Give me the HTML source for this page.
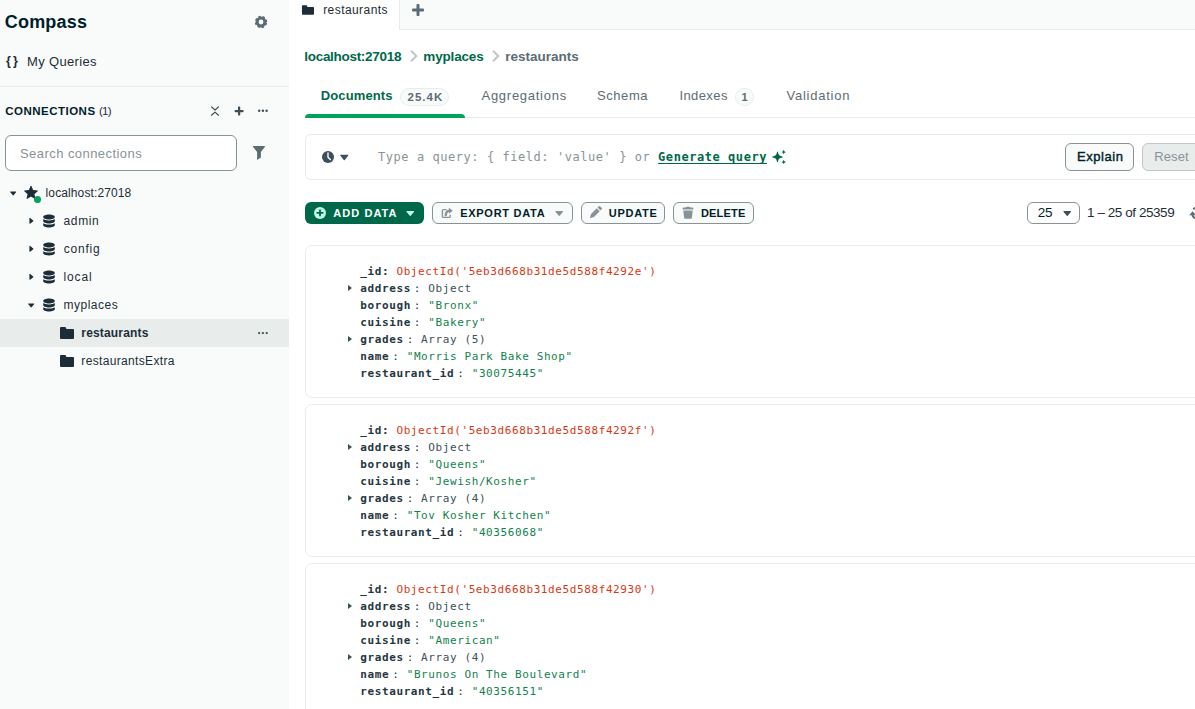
<!DOCTYPE html>
<html><head><meta charset="utf-8"><title>Compass</title>
<style>
*{box-sizing:border-box;margin:0;padding:0}
html,body{width:1195px;height:709px;overflow:hidden;background:#fff}
body{font-family:"Liberation Sans",sans-serif;color:#001e2b;font-size:13px;position:relative}
.abs{position:absolute;white-space:nowrap}
svg{position:absolute;overflow:visible}
.mono{font-family:"DejaVu Sans Mono","Liberation Mono",monospace}
.t12{font-size:12px;line-height:16px;color:#1c2d38}
.btn{position:absolute;top:202px;height:22px;border:1px solid #889397;border-radius:6px;background:#f9fbfa}
.btxt{position:absolute;top:205px;font-size:11px;line-height:16px;font-weight:700;color:#001e2b;white-space:nowrap}
.card{position:absolute;left:305px;width:920px;height:153px;border:1px solid #e8edeb;border-radius:7px;background:#fff}
.doc{position:absolute;left:54.3px;top:17px;font-size:11px;letter-spacing:0.6px;line-height:17px;white-space:pre;color:#3d4f58}
.doc b{color:#26363f}
.doc .c{margin-left:3px;color:#26363f}
.doc .oid{color:#d83713}
.doc .s{color:#12824d}
.doc .t{color:#3d4f58}
.car{position:absolute;left:-12px;width:0;height:0;border-left:4px solid #3d4f58;border-top:3px solid transparent;border-bottom:3px solid transparent}
</style></head><body>
<!-- ================= SIDEBAR ================= -->
<div class="abs" style="left:0;top:0;width:289px;height:709px;background:#f9fbfa"></div>
<div id="t_compass" class="abs" style="left:4.8px;top:10.7px;font-size:18px;font-weight:700;line-height:22px;color:#001e2b;letter-spacing:0.18px">Compass</div>
<svg id="i_gear" style="left:253px;top:14px" width="16" height="16" viewBox="0 0 16 16"><circle cx="8" cy="8" r="3.9" fill="none" stroke="#5c6c75" stroke-width="3"/><circle cx="8" cy="8" r="5.5" fill="none" stroke="#5c6c75" stroke-width="1.4" stroke-dasharray="2.5 1.82" stroke-dashoffset="3.41"/></svg>
<div id="t_braces" class="abs" style="left:6px;top:52px;font-size:12.5px;font-weight:700;line-height:18px;color:#1c2d38;letter-spacing:2.2px">{}</div>
<div id="t_myq" class="abs" style="left:27px;top:53.2px;font-size:13px;line-height:18px;color:#1c2d38;letter-spacing:0.35px">My Queries</div>
<div class="abs" style="left:0;top:86px;width:289px;height:1px;background:#e8edeb"></div>
<div id="t_conn" class="abs" style="left:5.3px;top:102px;font-size:11.5px;font-weight:700;line-height:18px;color:#001e2b;letter-spacing:0.48px">CONNECTIONS</div>
<div id="t_conn1" class="abs" style="left:99px;top:102px;font-size:11.5px;line-height:18px;color:#1c2d38;letter-spacing:-0.8px">(1)</div>
<svg id="i_collapse" style="left:207px;top:103px" width="16" height="16" viewBox="0 0 16 16" fill="none" stroke="#3d4f58" stroke-width="1.25" stroke-linecap="round" stroke-linejoin="round"><path d="M4.5 3.9 8 7l3.500-3.100M4.500 12.200 8 9.100l3.500 3.100"/></svg>
<svg id="i_plus_s" style="left:231px;top:103px" width="16" height="16" viewBox="0 0 16 16"><path fill="#3d4f58" d="M7.5 2a1 1 0 0 0-1 1v3.5H3a1 1 0 0 0-1 1v1a1 1 0 0 0 1 1h3.5V13a1 1 0 0 0 1 1h1a1 1 0 0 0 1-1V9.5H13a1 1 0 0 0 1-1v-1a1 1 0 0 0-1-1H9.5V3a1 1 0 0 0-1-1h-1Z" transform="translate(8.1 8.1) scale(0.75) translate(-8 -8)"/></svg>
<svg id="i_dots_s" style="left:255px;top:103px" width="16" height="16" viewBox="0 0 16 16" fill="#3d4f58"><circle cx="4.200" cy="7.700" r="1.200"/><circle cx="7.900" cy="7.700" r="1.200"/><circle cx="11.600" cy="7.700" r="1.200"/></svg>
<div class="abs" style="left:5px;top:135px;width:232px;height:36px;border:1px solid #889397;border-radius:6px;background:#fff"></div>
<div id="t_search" class="abs" style="left:20px;top:144.5px;font-size:13px;line-height:18px;color:#889397;letter-spacing:0.44px">Search connections</div>
<svg id="i_filter" style="left:251px;top:145px" width="16" height="16" viewBox="0 0 16 16"><path fill="#5c6c75" d="M2.300 0.900h11.400c.4 0 .6.500.3.800L9.900 7.100v5.500L6.100 14.900V7.100L2 1.700c-.3-.3-.1-.8.3-.8z"/></svg>

<!-- tree -->
<div class="abs" style="left:0;top:319px;width:289px;height:28px;background:#e8edeb"></div>
<svg style="left:5px;top:185px" width="16" height="16" viewBox="0 0 16 16"><path fill="#1c2d38" d="M8.679 10.796a.554.554 0 0 1-.858 0L4.64 6.976C4.32 6.594 4.582 6 5.069 6h6.362c.487 0 .748.594.43.976l-3.182 3.82Z" transform="translate(8 8) scale(0.8) translate(-8 -8)"/></svg>
<svg id="i_star" style="left:23px;top:184.5px" width="16" height="16" viewBox="0 0 16 16"><path fill="#1c2d38" d="M7.538 1.11a.5.5 0 0 1 .924 0l1.537 3.696a.5.5 0 0 0 .421.306l3.99.32a.5.5 0 0 1 .285.878l-3.04 2.604a.5.5 0 0 0-.16.496l.928 3.893a.5.5 0 0 1-.747.542L8.261 11.76a.5.5 0 0 0-.522 0l-3.415 2.086a.5.5 0 0 1-.747-.542l.928-3.893a.5.5 0 0 0-.16-.496L1.304 6.31a.5.5 0 0 1 .285-.878l3.99-.32a.5.5 0 0 0 .421-.306L7.538 1.11Z"/></svg>
<div class="abs" style="left:33.5px;top:195.5px;width:7px;height:7px;border-radius:50%;background:#00a35c"></div>
<div id="t_host" class="abs t12" style="left:45.6px;top:185px;letter-spacing:0.11px">localhost:27018</div>

<svg style="left:23px;top:213px" width="16" height="16" viewBox="0 0 16 16"><path fill="#1c2d38" d="M10.796 7.321a.554.554 0 0 1 0 .858l-3.82 3.181c-.382.319-.976.057-.976-.43V4.57c0-.487.594-.749.976-.43l3.82 3.182Z" transform="translate(8 8) scale(0.8) translate(-8 -8)"/></svg>
<svg style="left:23px;top:241px" width="16" height="16" viewBox="0 0 16 16"><path fill="#1c2d38" d="M10.796 7.321a.554.554 0 0 1 0 .858l-3.82 3.181c-.382.319-.976.057-.976-.43V4.57c0-.487.594-.749.976-.43l3.82 3.182Z" transform="translate(8 8) scale(0.8) translate(-8 -8)"/></svg>
<svg style="left:23px;top:269px" width="16" height="16" viewBox="0 0 16 16"><path fill="#1c2d38" d="M10.796 7.321a.554.554 0 0 1 0 .858l-3.82 3.181c-.382.319-.976.057-.976-.43V4.57c0-.487.594-.749.976-.43l3.82 3.182Z" transform="translate(8 8) scale(0.8) translate(-8 -8)"/></svg>
<svg style="left:23px;top:297px" width="16" height="16" viewBox="0 0 16 16"><path fill="#1c2d38" d="M8.679 10.796a.554.554 0 0 1-.858 0L4.64 6.976C4.32 6.594 4.582 6 5.069 6h6.362c.487 0 .748.594.43.976l-3.182 3.82Z" transform="translate(8 8) scale(0.8) translate(-8 -8)"/></svg>

<svg class="db" style="left:41px;top:213px" width="16" height="16" viewBox="0 0 16 16" fill="#1c2d38"><path d="M8 1.500c3.200 0 5.800 1.100 5.800 2.500S11.200 6.500 8 6.500 2.200 5.400 2.200 4 4.800 1.500 8 1.500zM2.200 6.100c1 .8 3.200 1.300 5.800 1.300s4.800-.5 5.800-1.300v2.200c0 1.200-2.600 2.200-5.800 2.200S2.200 9.500 2.200 8.300zM2.200 10.200c1 .8 3.200 1.300 5.800 1.300s4.800-.5 5.800-1.300v2c0 1.200-2.600 2.200-5.800 2.200S2.200 13.400 2.200 12.200z"/></svg>
<svg class="db" style="left:41px;top:241px" width="16" height="16" viewBox="0 0 16 16" fill="#1c2d38"><path d="M8 1.500c3.200 0 5.800 1.100 5.800 2.500S11.200 6.500 8 6.500 2.200 5.400 2.200 4 4.800 1.500 8 1.500zM2.200 6.100c1 .8 3.200 1.300 5.800 1.300s4.800-.5 5.800-1.300v2.200c0 1.200-2.600 2.200-5.800 2.200S2.200 9.500 2.200 8.300zM2.200 10.200c1 .8 3.200 1.300 5.800 1.300s4.800-.5 5.800-1.300v2c0 1.200-2.600 2.200-5.800 2.200S2.200 13.400 2.200 12.200z"/></svg>
<svg class="db" style="left:41px;top:269px" width="16" height="16" viewBox="0 0 16 16" fill="#1c2d38"><path d="M8 1.500c3.200 0 5.800 1.100 5.800 2.500S11.200 6.500 8 6.500 2.200 5.400 2.200 4 4.800 1.500 8 1.500zM2.200 6.100c1 .8 3.200 1.300 5.800 1.300s4.800-.5 5.800-1.300v2.200c0 1.200-2.600 2.200-5.800 2.200S2.200 9.500 2.200 8.300zM2.200 10.200c1 .8 3.200 1.300 5.800 1.300s4.800-.5 5.800-1.300v2c0 1.200-2.600 2.200-5.800 2.200S2.200 13.400 2.200 12.200z"/></svg>
<svg class="db" style="left:41px;top:297px" width="16" height="16" viewBox="0 0 16 16" fill="#1c2d38"><path d="M8 1.500c3.200 0 5.800 1.100 5.800 2.500S11.200 6.500 8 6.500 2.200 5.400 2.200 4 4.800 1.500 8 1.500zM2.200 6.100c1 .8 3.200 1.300 5.800 1.300s4.800-.5 5.800-1.300v2.200c0 1.200-2.600 2.200-5.800 2.200S2.200 9.500 2.200 8.300zM2.200 10.200c1 .8 3.200 1.300 5.800 1.300s4.800-.5 5.800-1.300v2c0 1.200-2.600 2.200-5.800 2.200S2.200 13.400 2.200 12.200z"/></svg>

<div id="t_admin" class="abs t12" style="left:63.5px;top:213px;font-size:12px;letter-spacing:0.65px">admin</div>
<div id="t_config" class="abs t12" style="left:63.7px;top:241px;font-size:12px;letter-spacing:0.78px">config</div>
<div id="t_local" class="abs t12" style="left:63.5px;top:269px;font-size:12px;letter-spacing:0.85px">local</div>
<div id="t_myplaces" class="abs t12" style="left:63.5px;top:297px;font-size:12px;letter-spacing:0.5px">myplaces</div>

<svg style="left:59px;top:325px" width="16" height="16" viewBox="0 0 16 16"><path fill="#1c2d38" d="M2 2a1 1 0 0 0-1 1v10a1 1 0 0 0 1 1h12a1 1 0 0 0 1-1V5a1 1 0 0 0-1-1H8a1 1 0 0 1-1-1 1 1 0 0 0-1-1H2Z"/></svg>
<svg style="left:59px;top:353px" width="16" height="16" viewBox="0 0 16 16"><path fill="#1c2d38" d="M2 2a1 1 0 0 0-1 1v10a1 1 0 0 0 1 1h12a1 1 0 0 0 1-1V5a1 1 0 0 0-1-1H8a1 1 0 0 1-1-1 1 1 0 0 0-1-1H2Z"/></svg>
<div id="t_rest_s" class="abs t12" style="left:81.3px;top:325px;font-weight:700;letter-spacing:0.17px">restaurants</div>
<div id="t_restx" class="abs t12" style="left:81.3px;top:353px;letter-spacing:0.34px">restaurantsExtra</div>
<svg style="left:255px;top:325px" width="16" height="16" viewBox="0 0 16 16" fill="#3d4f58"><circle cx="4.1" cy="8.1" r="1.15"/><circle cx="7.9" cy="8.1" r="1.15"/><circle cx="11.7" cy="8.1" r="1.15"/></svg>

<!-- ================= MAIN ================= -->
<div class="abs" style="left:289px;top:0;width:906px;height:30px;background:#f9fbfa;border-bottom:1px solid #e8edeb"></div>
<div class="abs" style="left:289px;top:0;width:111px;height:30px;background:#fff;border-right:1px solid #e8edeb"></div>
<svg style="left:300px;top:2px" width="16" height="16" viewBox="0 0 16 16"><path fill="#1c2d38" d="M2 2.500a1 1 0 0 0-1 1v9a1 1 0 0 0 1 1h12a1 1 0 0 0 1-1V5.500a1 1 0 0 0-1-1H8a1 1 0 0 1-1-1 1 1 0 0 0-1-1H2Z" transform="translate(1.100 1.100) scale(0.860)"/></svg>
<div id="t_tab" class="abs t12" style="left:323.2px;top:1.6px;letter-spacing:0.43px">restaurants</div>
<svg style="left:410px;top:2px" width="16" height="16" viewBox="0 0 16 16"><path fill="#5c6c75" d="M7.5 2a1 1 0 0 0-1 1v3.5H3a1 1 0 0 0-1 1v1a1 1 0 0 0 1 1h3.5V13a1 1 0 0 0 1 1h1a1 1 0 0 0 1-1V9.5H13a1 1 0 0 0 1-1v-1a1 1 0 0 0-1-1H9.5V3a1 1 0 0 0-1-1h-1Z"/></svg>

<div id="t_bc1" class="abs" style="left:304.3px;top:47.7px;font-size:13.500px;line-height:18px;font-weight:700;color:#00684a;letter-spacing:-0.3px">localhost:27018</div>
<svg style="left:405.500px;top:48px" width="16" height="16" viewBox="0 0 16 16" fill="none" stroke="#c1c7c6" stroke-width="2" ><path d="M5 2.700 10.300 8 5 13.300"/></svg>
<div id="t_bc2" class="abs" style="left:423.3px;top:47.7px;font-size:13.500px;line-height:18px;font-weight:700;color:#00684a;letter-spacing:-0.16px">myplaces</div>
<svg style="left:487.500px;top:48px" width="16" height="16" viewBox="0 0 16 16" fill="none" stroke="#c1c7c6" stroke-width="2" ><path d="M5 2.700 10.300 8 5 13.300"/></svg>
<div id="t_bc3" class="abs" style="left:505.3px;top:47.7px;font-size:13.500px;line-height:18px;font-weight:700;color:#5c6c75">restaurants</div>

<div id="t_docs" class="abs" style="left:320.8px;top:87.3px;font-size:13px;line-height:18px;font-weight:700;color:#00684a;letter-spacing:0.12px">Documents</div>
<div class="abs" style="left:400px;top:88px;width:49px;height:18px;border:1px solid #e8edeb;border-radius:9px;background:#f9fbfa"></div>
<div id="t_254" class="abs" style="left:407.5px;top:87.7px;font-size:11.5px;line-height:18px;font-weight:700;color:#5c6c75;letter-spacing:1.0px">25.4K</div>
<div id="t_aggr" class="abs" style="left:481.5px;top:87.3px;font-size:13px;line-height:18px;color:#5c6c75;letter-spacing:0.73px">Aggregations</div>
<div id="t_schema" class="abs" style="left:597.1px;top:87.3px;font-size:13px;line-height:18px;color:#5c6c75;letter-spacing:0.54px">Schema</div>
<div id="t_idx" class="abs" style="left:679.4px;top:87.3px;font-size:13px;line-height:18px;color:#5c6c75;letter-spacing:0.42px">Indexes</div>
<div class="abs" style="left:735px;top:88px;width:19px;height:18px;border:1px solid #e8edeb;border-radius:9px;background:#f9fbfa"></div>
<div id="t_one" class="abs" style="left:741.500px;top:87.7px;font-size:11px;line-height:18px;font-weight:700;color:#5c6c75">1</div>
<div id="t_valid" class="abs" style="left:786.5px;top:87.3px;font-size:13px;line-height:18px;color:#5c6c75;letter-spacing:0.76px">Validation</div>
<div class="abs" style="left:305px;top:117px;width:890px;height:1px;background:#e8edeb"></div>
<div class="abs" style="left:305px;top:114px;width:160px;height:4px;background:#00a35c;border-radius:4px 4px 0 0"></div>

<!-- query bar -->
<div class="abs" style="left:305px;top:134px;width:920px;height:46px;border:1px solid #e8edeb;border-radius:6px;background:#fff"></div>
<svg id="i_clock" style="left:320px;top:149px" width="16" height="16" viewBox="0 0 16 16"><circle cx="8" cy="8" r="6" fill="#3d4f58"/><path d="M8 4v4.300l2.300 2.300" fill="none" stroke="#fff" stroke-width="1.400" stroke-linecap="round"/></svg>
<svg style="left:336px;top:149px" width="16" height="16" viewBox="0 0 16 16"><path fill="#3d4f58" d="M8.679 10.796a.554.554 0 0 1-.858 0L4.640 6.976C4.320 6.594 4.582 6 5.069 6h6.362c.487 0 .748.594.430.976l-3.182 3.820Z" transform="translate(8 8.3) scale(1.08) translate(-8 -8.3)"/></svg>
<div id="t_query" class="abs mono" style="left:378px;top:148px;font-size:12px;letter-spacing:0.555px;line-height:18px;color:#889397">Type a query: { field: 'value' } or <span style="color:#00684a;font-weight:700;text-decoration:underline;text-decoration-thickness:1px;text-underline-offset:1.5px">Generate query</span></div>
<svg id="i_spark" style="left:770px;top:149px" width="16" height="16" viewBox="0 0 16 16" fill="#00684a"><path d="M7.500 2.600c.500 3.500 1.400 4.400 4.900 4.900v1c-3.500.500-4.400 1.400-4.900 4.900h-1c-.500-3.500-1.400-4.400-4.900-4.900v-1c3.500-.500 4.400-1.400 4.900-4.900z" transform="translate(7.500 7.900) scale(0.950) translate(-7 -8)"/><path d="M13 0.500c.200 1.300.600 1.700 1.900 1.900v.400c-1.300.200-1.700.600-1.900 1.900h-.400c-.200-1.300-.600-1.700-1.900-1.900v-.400c1.300-.200 1.700-.600 1.900-1.900z" transform="translate(0.900 0.500)"/><path d="M13 11c.200 1.300.600 1.700 1.900 1.900v.400c-1.300.200-1.700.600-1.900 1.900h-.400c-.200-1.300-.600-1.700-1.900-1.900v-.400c1.300-.200 1.700-.600 1.900-1.900z" transform="translate(0.900 -0.100)"/></svg>
<div class="abs" style="left:1065px;top:143px;width:69px;height:28px;border:1px solid #889397;border-radius:6px;background:#f9fbfa"></div>
<div id="t_explain" class="abs" style="left:1077px;top:148.4px;font-size:13px;line-height:18px;font-weight:400;color:#001e2b;letter-spacing:0.55px;-webkit-text-stroke:0.4px #001e2b">Explain</div>
<div class="abs" style="left:1142px;top:143px;width:70px;height:28px;border:1px solid #c1c7c6;border-radius:6px;background:#e8edeb"></div>
<div id="t_reset" class="abs" style="left:1154.2px;top:148.4px;font-size:13px;line-height:18px;color:#889397;letter-spacing:0.12px">Reset</div>

<!-- action bar -->
<div class="abs" style="left:305px;top:202px;width:119px;height:22px;border-radius:6px;background:#00684a"></div>
<svg id="i_addc" style="left:312px;top:205px" width="16" height="16" viewBox="0 0 16 16"><circle cx="8" cy="7.900" r="6" fill="#c0fae6"/><path fill="#00684a" d="M7.100 4.500h1.800v2.500h2.500v1.800H8.900v2.500H7.100V8.800H4.600V7h2.500z"/></svg>
<div id="t_add" class="abs btxt" style="left:333.3px;color:#fff;letter-spacing:1.05px">ADD DATA</div>
<svg style="left:401.500px;top:205px" width="16" height="16" viewBox="0 0 16 16"><path fill="#c0fae6" d="M8.679 10.796a.554.554 0 0 1-.858 0L4.640 6.976C4.320 6.594 4.582 6 5.069 6h6.362c.487 0 .748.594.430.976l-3.182 3.820Z"/></svg>

<div class="btn" style="left:432px;width:141px"></div>
<svg id="i_export" style="left:439px;top:205px" width="16" height="16" viewBox="0 0 16 16" fill="none" stroke="#889397"><path d="M7.600 4.600H4.400a1 1 0 0 0-1 1v5.800a1 1 0 0 0 1 1h5.800a1 1 0 0 0 1-1V9.700" stroke-width="1.400"/><path d="M6.700 10.100c.200-2.700 1.700-4.200 4.200-4.400" stroke-width="2.300" stroke-linecap="round"/><path d="M9.900 2.700 13.800 5.700 9.900 8.700z" fill="#889397" stroke="none"/></svg>
<div id="t_export" class="abs btxt" style="left:460.2px;letter-spacing:0.72px">EXPORT DATA</div>
<svg style="left:550.500px;top:205px" width="16" height="16" viewBox="0 0 16 16"><path fill="#889397" d="M8.679 10.796a.554.554 0 0 1-.858 0L4.640 6.976C4.320 6.594 4.582 6 5.069 6h6.362c.487 0 .748.594.430.976l-3.182 3.820Z"/></svg>

<div class="btn" style="left:581px;width:84px"></div>
<svg id="i_pencil" style="left:587.500px;top:204px" width="16" height="16" viewBox="0 0 16 16" fill="#889397"><path d="M10.900 2.200a.700.700 0 0 1 1 0l1.900 1.900a.700.700 0 0 1 0 1l-1.300 1.300-2.900-2.900 1.300-1.300zM8.800 4.300l2.900 2.900-5.700 5.700-3.600 1a.300.300 0 0 1-.400-.400l1-3.600 5.800-5.600z"/></svg>
<div id="t_update" class="abs btxt" style="left:608.8px;letter-spacing:0.72px">UPDATE</div>

<div class="btn" style="left:673px;width:81px"></div>
<svg id="i_trash" style="left:680px;top:205px" width="16" height="16" viewBox="0 0 16 16" fill="#889397"><path d="M5.700 2.500c.1-.5.500-.8 1-.8h2.600c.5 0 .9.300 1 .8h2.300c.5 0 .8.300.8.800v.600c0 .4-.3.700-.8.700H3.400c-.5 0-.8-.3-.8-.7v-.600c0-.5.300-.8.800-.8h2.300zM3.300 5.600h9.400l-.8 7.100c-.1.600-.6 1.100-1.200 1.100H5.300c-.6 0-1.100-.5-1.200-1.100l-.8-7.100z"/></svg>
<div id="t_delete" class="abs btxt" style="left:700.9px;letter-spacing:0.2px">DELETE</div>

<div class="abs" style="left:1027px;top:202px;width:53px;height:22px;border:1px solid #889397;border-radius:6px;background:#fff"></div>
<div id="t_25" class="abs" style="left:1037.8px;top:204px;font-size:13.500px;line-height:18px;color:#001e2b;letter-spacing:-0.4px">25</div>
<svg style="left:1059.3px;top:204.6px" width="16" height="16" viewBox="0 0 16 16"><path fill="#3d4f58" d="M8.679 10.796a.554.554 0 0 1-.858 0L4.640 6.976C4.320 6.594 4.582 6 5.069 6h6.362c.487 0 .748.594.430.976l-3.182 3.820Z"/></svg>
<div id="t_pager" class="abs" style="left:1087px;top:204px;font-size:13.500px;line-height:18px;color:#1c2d38;letter-spacing:-0.44px">1 – 25 of 25359</div>
<svg id="i_refresh" style="left:1188px;top:205px" width="16" height="16" viewBox="0 0 16 16" fill="none" stroke="#5c6c75" stroke-width="2"><path d="M4.400 9.500A4.300 4.300 0 0 0 8.500 13.300M5.300 4.300A4.600 4.600 0 0 1 8.500 2.900"/><path d="M1.200 10.200 4.500 6.200 8 10.200z" fill="#5c6c75" stroke="none"/></svg>

<!-- cards -->
<div class="card" style="top:245px"><div class="doc mono"><b>_id: </b><span class="oid">ObjectId('5eb3d668b31de5d588f4292e')</span>
<i class="car" style="top:22px"></i><b>address</b><span class="c">:</span> <span class="t">Object</span>
<b>borough</b><span class="c">:</span> <span class="s">"Bronx"</span>
<b>cuisine</b><span class="c">:</span> <span class="s">"Bakery"</span>
<i class="car" style="top:73px"></i><b>grades</b><span class="c">:</span> <span class="t">Array (5)</span>
<b>name</b><span class="c">:</span> <span class="s">"Morris Park Bake Shop"</span>
<b>restaurant_id</b><span class="c">:</span> <span class="s">"30075445"</span></div></div>

<div class="card" style="top:404px"><div class="doc mono"><b>_id: </b><span class="oid">ObjectId('5eb3d668b31de5d588f4292f')</span>
<i class="car" style="top:22px"></i><b>address</b><span class="c">:</span> <span class="t">Object</span>
<b>borough</b><span class="c">:</span> <span class="s">"Queens"</span>
<b>cuisine</b><span class="c">:</span> <span class="s">"Jewish/Kosher"</span>
<i class="car" style="top:73px"></i><b>grades</b><span class="c">:</span> <span class="t">Array (4)</span>
<b>name</b><span class="c">:</span> <span class="s">"Tov Kosher Kitchen"</span>
<b>restaurant_id</b><span class="c">:</span> <span class="s">"40356068"</span></div></div>

<div class="card" style="top:563px"><div class="doc mono"><b>_id: </b><span class="oid">ObjectId('5eb3d668b31de5d588f42930')</span>
<i class="car" style="top:22px"></i><b>address</b><span class="c">:</span> <span class="t">Object</span>
<b>borough</b><span class="c">:</span> <span class="s">"Queens"</span>
<b>cuisine</b><span class="c">:</span> <span class="s">"American"</span>
<i class="car" style="top:73px"></i><b>grades</b><span class="c">:</span> <span class="t">Array (4)</span>
<b>name</b><span class="c">:</span> <span class="s">"Brunos On The Boulevard"</span>
<b>restaurant_id</b><span class="c">:</span> <span class="s">"40356151"</span></div></div>
</body></html>
